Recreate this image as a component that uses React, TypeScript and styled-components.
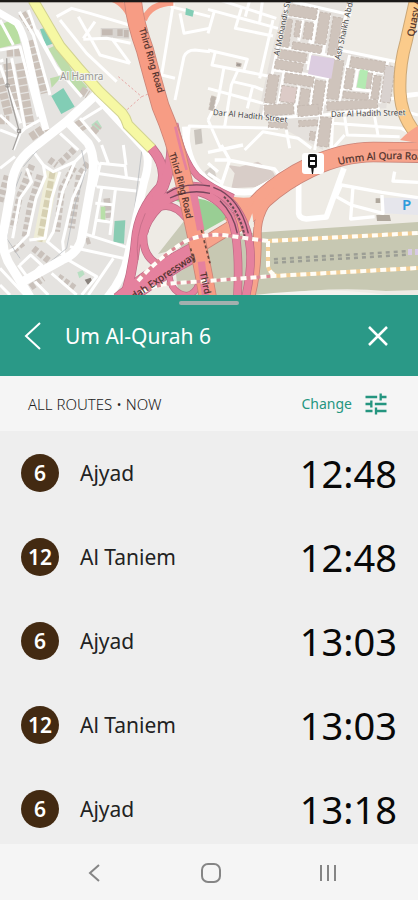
import React from "react";
import styled, { createGlobalStyle } from "styled-components";

const GlobalStyle = createGlobalStyle`
  * { box-sizing: border-box; }
  body {
    margin: 0;
    background: #f5f5f5;
    font-family: "Noto Sans", "Open Sans", sans-serif;
    color: #111;
  }
  button { font: inherit; border: 0; padding: 0; background: none; cursor: pointer; }
`;

const Page = styled.div`
  display: flex;
  flex-direction: column;
  min-height: 100vh;
`;

const MapArea = styled.section`
  flex: 1 0 295px;
  display: flex;
  overflow: hidden;
  border-top: 2px solid #1b1917;
  background: #eeebe5;
`;

const MapSvg = styled.svg`
  width: 100%;
  height: 293px;
  flex: 1;
  display: block;
`;

const SheetHeader = styled.header`
  display: flex;
  flex-direction: column;
  align-items: center;
  padding: 6px 24px 20px;
  background: #2a9987;
  color: #fff;
`;

const Handle = styled.div`
  width: 60px;
  height: 4px;
  border-radius: 2px;
  background: #a3b0ae;
`;

const TitleRow = styled.div`
  display: flex;
  align-items: center;
  align-self: stretch;
  margin-top: 11px;
  height: 40px;
`;

const Title = styled.h1`
  flex: 1;
  margin: 0 0 0 24px;
  font-size: 21px;
  line-height: 28px;
  font-weight: 400;
`;

const IconButton = styled.button`
  display: flex;
  color: inherit;
`;

const FilterBar = styled.div`
  display: flex;
  align-items: center;
  justify-content: space-between;
  height: 55px;
  padding: 0 28px;
  background: #f5f5f5;
`;

const FilterLabel = styled.span`
  font-size: 15px;
  line-height: 20px;
  font-weight: 300;
  color: #222;
`;

const ChangeButton = styled.button`
  display: flex;
  align-items: center;
  gap: 10px;
  color: #24957f;
  font-size: 14px;
  line-height: 20px;
`;

const Departures = styled.ul`
  flex: none;
  display: grid;
  grid-auto-rows: 84px;
  height: 413px;
  overflow: hidden;
  margin: 0;
  padding: 0;
  list-style: none;
  background: #eee;
`;

const Departure = styled.li`
  display: flex;
  align-items: center;
  padding: 0 21px;
`;

const RouteBadge = styled.span`
  display: flex;
  align-items: center;
  justify-content: center;
  width: 38px;
  height: 38px;
  border-radius: 50%;
  background: #432a12;
  color: #fff;
  font-size: 21px;
  line-height: 28px;
  font-weight: 600;
`;

const Destination = styled.span`
  flex: 1;
  margin-left: 21px;
  font-size: 21px;
  line-height: 28px;
  color: #222;
`;

const Time = styled.time`
  font-size: 38px;
  line-height: 48px;
  color: #080808;
`;

const SystemNav = styled.nav`
  display: grid;
  grid-template-columns: repeat(3, 117px);
  justify-content: center;
  align-items: center;
  height: 56px;
  padding: 2px 0 0 3px;
  background: #f5f5f5;
  color: #858585;
`;

const NavButton = styled.button`
  display: flex;
  justify-content: center;
  color: inherit;
`;

const departures = [
  { route: "6", name: "Ajyad", time: "12:48" },
  { route: "12", name: "Al Taniem", time: "12:48" },
  { route: "6", name: "Ajyad", time: "13:03" },
  { route: "12", name: "Al Taniem", time: "13:03" },
  { route: "6", name: "Ajyad", time: "13:18" },
];

type Block = [number, number, number, number, number, string?];

/* x, y, width, height, rotation, optional fill */
const northBlocks: Block[] = [
  [240, 12, 90, 34, 9], [336, 36, 32, 94, 9], [376, 50, 28, 115, 9],
  [228, 55, 26, 85, 8], [264, 62, 16, 48, 8], [292, 66, 26, 50, 8],
  [255, 125, 88, 22, 9], [214, 148, 84, 28, 9], [203, 178, 84, 28, 9],
  [182, 222, 32, 86, 9], [232, 218, 88, 30, 9], [222, 256, 46, 48, 9, "#dccbc7"],
  [280, 265, 28, 52, 9], [322, 240, 32, 100, 8], [372, 178, 36, 118, 8],
  [430, 170, 104, 32, 9], [416, 204, 24, 62, 8], [476, 218, 18, 46, 8],
  [498, 226, 22, 70, 8], [406, 274, 76, 20, 6], [168, 316, 88, 32, -4],
  [268, 318, 62, 32, -5], [356, 306, 152, 26, -3], [532, 196, 30, 110, 8, "#d9d2cf"],
  [338, 350, 34, 88, 7], [182, 366, 56, 16, 3], [272, 362, 56, 18, -3],
  [306, 394, 16, 26, 4], [10, 288, 14, 42, 10, "#bdb5ad"], [86, 188, 14, 10, 10, "#9e9791"],
];

const westRows: string[] = [
  "M22 190 L50 330", "M58 190 L92 378", "M95 120 L135 280", "M20 158 L66 156",
  "M-2 235 L26 345", "M66 40 L96 86", "M-5 360 L28 360", "M92 412 L142 378",
  "M232 362 L250 392", "M276 398 L296 376", "M242 270 L264 284",
];

const southRows: string[] = [
  "M0 170 L22 90", "M96 60 L60 150 L38 250", "M120 90 L92 180 L74 280",
  "M148 44 L170 60", "M180 54 L226 10", "M222 66 L186 130 L170 260",
  "M264 55 L238 90 L214 250", "M40 316 L74 290", "M100 310 L150 350",
  "M74 440 L130 400", "M175 395 L225 430", "M320 160 L328 230", "M258 290 L270 286",
];

/* Motorway ramps: path, width */
const ramps: [string, number][] = [
  ["M455 445 Q505 505 482 560 Q415 630 408 720 Q400 810 372 900", 26],
  ["M516 440 Q514 500 490 560 Q440 640 428 700", 28],
  ["M560 655 Q520 606 478 622 Q440 660 430 705 Q428 765 468 790", 20],
  ["M360 905 Q440 840 530 785 L604 745", 56],
  ["M525 370 Q548 480 592 528 Q630 560 700 592", 16],
  ["M455 640 Q500 570 580 558 Q655 562 700 615 Q750 680 752 770 Q752 830 735 900", 22],
  ["M450 650 Q500 580 590 574 Q655 590 692 650 Q722 720 712 900", 22],
  ["M508 830 Q515 880 560 886 Q605 880 606 780", 16],
];

const trunk = "M398 -10 Q402 60 435 150 Q456 230 482 320 Q525 420 543 510 Q566 600 584 690 Q606 790 625 900";
const ummQura = "M690 680 Q745 645 790 595 Q850 540 930 502 Q1030 456 1120 456 L1270 458";
const ummRamp = "M830 570 Q772 630 772 700 Q774 820 750 900";

function CityMap() {
  return (
    <MapSvg viewBox="0 2 418 293" preserveAspectRatio="xMidYMin slice" role="img" aria-label="Map around Umm Al Qura Road">
      <defs>
        <path id="ring-north" d="M139 29 Q148 58 160 101" />
        <path id="ring-mid" d="M169 154 Q180 185 188 228" />
        <path id="ring-south" d="M200 273 L208 310" />
        <path id="umm" d="M339 165 Q378 155 440 162" />
        <path id="expressway" d="M134 300 Q164 280 204 253" />
        <path id="hadith-west" d="M213 115 Q238 117 292 123" />
        <path id="hadith-east" d="M331 117 L410 115" />
        <path id="mohandis" d="M279 56 L297 -30" />
        <path id="shaikh" d="M340 60 L358 -20" />
        <path id="quasy" d="M414 37 L424 -20" />
      </defs>
      <rect width="418" height="295" fill="#eeebe5" />

      {/* West quarter */}
      <path d="M0 0H36L60 45L100 90L150 150L138 220L122 295H0Z" fill="#e5e3e0" />
      <g transform="scale(.3333)">
        <path d="M0 75 L45 55 L62 130 L0 144Z" fill="#b9dea1" />
        <path d="M120 88 L147 80 L166 128 L138 138Z" fill="#82cdb5" />
        <path d="M145 146 L174 132 L215 210 L262 262 L240 280 L200 236Z" fill="#bddcaa" />
        <path d="M150 235 L190 225 L155 263Z" fill="#bddcaa" />
        <path d="M154 288 L190 264 L224 320 L184 342Z" fill="#82cdb5" />
        <path d="M274 374 L292 360 L306 382 L288 398Z" fill="#b8dfc2" />
        <g fill="none" stroke="#cbc1b9" strokeWidth="25" strokeDasharray="19 4">
          {westRows.map((d) => <path key={d} d={d} />)}
        </g>
        <path d="M302 84 L388 84 L388 116 L302 112Z" fill="#d9d5d1" />
        <path d="M306 88h32v18h-32z M352 88h16v20h-16z M372 90h14v22h-14z" fill="#c4bab3" />
        <g fill="none" stroke="#fff" strokeWidth="9" strokeLinejoin="round">
          <path d="M58 35 L100 105 L150 285 M85 30 L110 100 L180 225 M110 90 L168 200 L245 290 M0 150 L60 140 L115 350 M35 175 L75 385 M0 195 L62 370 M10 180 L0 184 M0 345 L60 400 L75 385 L120 360 M60 400 L40 450 M0 390 L52 410 M240 355 L300 425 M245 360 L308 322 M310 320 L430 450 M180 400 L235 450 M0 60 L40 135" />
          <path d="M170 50 L215 25 L270 40 L388 75 M180 60 L260 160 L350 245 M235 50 L300 165 L390 190 M250 118 L320 115 L392 130 M335 115 L390 190 M285 65 L250 115" />
          <path d="M520 10 L485 225 L525 235 M540 40 L552 100 L630 85 M512 20 L630 50 M525 300 L552 170 Q560 150 585 150 L630 155 M560 450 L568 378 L630 380" />
        </g>
        <path d="M582 390 L604 386 L608 430 L586 434Z" fill="#c9c4bd" />
        <path d="M558 24 L582 32 L578 50 L556 44Z" fill="#82cdb5" />
        <path d="M355 230 L425 290 L380 330 M425 290 L445 282" fill="none" stroke="#e6a9a6" strokeWidth="3" strokeDasharray="7 6" />
        <path d="M20 175 L22 260 L58 395 L38 450" fill="none" stroke="#a5a29f" strokeWidth="4" />
        <path d="M52 388h10v10h-10z M18 252h9v9h-9z" fill="none" stroke="#8f8b88" strokeWidth="3" />
      </g>

      {/* South-west quarter */}
      <g transform="translate(0 145) scale(.3333)">
        <g fill="none" stroke="#efedd8" strokeWidth="38"><path d="M158 80 L145 150 L118 290" /></g>
        <g fill="none" stroke="#d6d0b2" strokeWidth="18" strokeDasharray="22 7"><path d="M158 80 L145 150 L118 290" /></g>
        <g fill="none" stroke="#c9c1bb" strokeWidth="20" strokeDasharray="15 7">
          {southRows.map((d) => <path key={d} d={d} />)}
        </g>
        <path d="M344 228 L376 226 L372 296 L340 290Z" fill="#8accb3" />
        <path d="M232 382 L248 376 L254 388 L238 400Z" fill="#b8dfc2" />
        <path d="M254 404 L272 398 L278 412 L264 420Z" fill="#8a837d" />
        <path d="M302 185 L316 185 L316 225 L302 225Z" fill="#b8dfa8" />
        <g fill="none" stroke="#fff" strokeWidth="9" strokeLinejoin="round">
          <path d="M100 20 L130 60 L160 80 L225 50 L265 10 M80 70 L95 110 L60 160 L38 280 M130 60 L136 95 L108 160 L84 270 L45 310 L15 325 M180 80 L155 160 L135 280 L88 285 M225 50 L188 140 L160 260 L142 290 L190 330 M256 78 L218 160 L188 290 L192 330" />
          <path d="M280 40 L300 60 L285 125 M290 125 L410 138 M290 85 L425 105 M300 55 L375 62 L380 100 M305 0 L325 55 M370 0 L378 60 M305 130 L280 270 M346 135 L330 270 M286 175 L345 180 M284 225 L335 232 M250 265 L390 310 M210 305 L230 310 L380 342 M340 340 L265 450 M205 345 L290 395 L245 450 M155 385 L230 450 M60 360 L92 330 L125 360 L85 400 L55 360 M105 410 L145 450 M0 370 L75 450 M0 420 L30 450 M0 70 L45 35" />
        </g>
        <g stroke="#aeb2b8" strokeWidth="2" fill="none">
          <path d="M65 80 L38 150 L20 280 L60 340 M125 0 L70 65 M245 15 L258 75 L225 180 L200 310 L85 405 M290 60 L270 200 L250 280 M425 20 L395 260" />
        </g>
      </g>

      {/* Wide local roads */}
      <g fill="none" stroke="#fff" strokeWidth="9" strokeLinejoin="round">
        <path d="M-2 12 L17 23 Q24 34 27 50 L37 97 L46 130" strokeWidth="7" />
        <path d="M99 92 L66 122 L33 148 Q12 164 11 190 L3 235 Q2 254 12 268 L30 297" />
        <path d="M66 120 L88 143 Q96 157 92 180 L82 236 Q80 252 62 260 L24 281" />
        <path d="M96 96 L145 149 Q151 160 144 182 L128 255 Q124 278 106 299" strokeWidth="8" />
      </g>
      <path d="M33 0 L60 46 Q78 68 99 91 L122 113 Q126 118 128 125 L152 149" fill="none" stroke="#d2d391" strokeWidth="11" />
      <path d="M33 0 L60 46 Q78 68 99 91 L122 113 Q126 118 128 125 L152 149" fill="none" stroke="#f6f8a3" strokeWidth="9" />

      {/* Northern and eastern quarters */}
      <g transform="translate(208 0) scale(.3333)">
        <path d="M232 0 L435 0 L395 150 L550 190 L535 325 L360 335 L345 450 L150 345 L190 160Z" fill="#e5e1dd" />
        <g fill="none" stroke="#fff" strokeWidth="9" strokeLinejoin="round">
          <path d="M0 28 L210 85 M35 0 L205 55 M20 30 L0 100 M100 25 L82 85 L195 108 M125 0 L112 50 M163 5 L155 65 M195 60 L155 235 M0 150 L118 178 L108 210 M22 155 L12 195 L190 230 M48 202 L30 300 L0 360 M90 210 L70 255 L50 380 M75 245 L140 260 L165 270 M135 255 L118 325 M0 265 L165 310 M0 380 L210 385 M0 360 L40 450 M110 450 L165 395 L270 415 L310 445 M235 390 L245 445" />
          <path d="M240 0 L165 350 M235 45 L325 60 M330 30 L300 210 M255 5 L430 45 M285 60 L272 122 M325 50 L305 130 M365 45 L345 165 M218 140 L310 155 L380 170 M210 175 L300 188 M198 210 L310 225 L370 238 M228 216 L210 315 M275 240 L260 350 M318 225 L305 350 M360 235 L320 450 M425 0 L380 190 L350 310 M395 150 L580 188 M425 165 L393 305 M410 200 L530 220 M450 200 L438 270 M500 218 L485 300 M405 265 L520 275 M540 180 L515 310 M165 315 L260 315 M180 355 L345 345 L515 325 M350 310 L520 300 L630 285" />
          <path d="M375 340 L370 450 M410 350 L418 405 L575 410 M375 370 L580 385 L630 410 M410 405 L370 450 M500 350 L510 405 M580 285 L630 280 M575 330 L630 345" />
        </g>
        {northBlocks.map(([x, y, w, h, r, fill]) => (
          <g key={`${x}-${y}`} transform={`rotate(${r} ${x} ${y})`}>
            <rect x={x} y={y} width={w} height={h} fill={fill ?? "#cfc4bc"} />
            <rect x={x} y={y} width={w} height={h} fill="none" stroke="#c5bab2" strokeWidth="3" strokeDasharray="9 5" />
          </g>
        ))}
        <path d="M310 166 L380 176 L370 236 L300 222Z" fill="#dccde0" />
        <path d="M456 208 L480 212 L472 268 L446 262Z" fill="#b4eab2" />
      </g>
      <g transform="translate(208 145) scale(.3333)">
        <path d="M60 60 L80 85 L70 130 L155 125 L205 100 L195 80 L150 50 L95 65Z" fill="#d8cdc8" />
        <path d="M-10 80 L15 60 L25 95 L5 110Z" fill="#d5d0ca" />
        <path d="M525 158 L630 158 L630 210 L525 205Z" fill="#e6e6ec" />
        <path d="M505 210h40l4 18h-42z M503 160h14v14h-14z" fill="#b0a89d" />
        <g fill="none" stroke="#fff" strokeWidth="10" strokeLinejoin="round">
          <path d="M0 22 L105 0 M40 0 L65 45 L40 120 M0 85 L45 115 M20 45 L60 45 L200 72 L215 92 L120 145 L0 130 M0 55 L30 80" />
          <path d="M272 110 L272 205 Q274 220 295 222 L355 216 L408 70" strokeWidth="17" />
          <path d="M385 155 L400 120 L522 142 L630 158 M435 125 L428 222 L500 215 M385 155 L430 180 L525 205 L522 150 M560 80 L555 108 L630 112" />
        </g>
      </g>
      <path d="M416 -2 L406 42 Q399 66 400 92 Q401 119 420 138" fill="none" stroke="#caa777" strokeWidth="13" />
      <path d="M416 -2 L406 42 Q399 66 400 92 Q401 119 420 138" fill="none" stroke="#fbcb8b" strokeWidth="11" />

      {/* Airfield */}
      <path d="M198 250 L232 234 L251 233 L418 222 V290 L386 291 Q330 286 262 296 H188Z" fill="#c7c8b2" />
      <path d="M158 254 L184 221 L198 243Z M176 274 L202 258 L204 295 L178 291Z" fill="#c9cab7" />
      <path d="M255 295 Q330 286 386 295Z" fill="#f5f3ef" />
      <path d="M274 261 L406 253" stroke="#9c9e95" strokeWidth="6" strokeDasharray="4 4" />
      <path d="M274 261 L406 253" stroke="#c7c8b2" strokeWidth="1" />
      <path d="M408 252 L418 252" stroke="#d7c9e4" strokeWidth="6" strokeDasharray="4 3" />

      {/* Junction */}
      <g transform="scale(.3333)" fill="none">
        <path d="M556 380 Q560 480 602 522 Q660 585 760 575 Q810 556 850 520 L930 482" stroke="#fff" strokeWidth="20" />
        <path d="M585 595 Q650 600 682 655 L604 698Z M508 596 L545 590 L552 610Z" fill="#99ce94" />
        <path d={ummQura} stroke="#c98378" strokeWidth="62" />
        <path d={ummRamp} stroke="#c98378" strokeWidth="26" />
        <path d="M600 738 L760 640" stroke="#c98378" strokeWidth="40" />
        <path d={ummQura} stroke="#f7a38b" strokeWidth="57" />
        <path d={ummRamp} stroke="#f7a38b" strokeWidth="21" />
        <path d="M600 738 L760 640" stroke="#f7a38b" strokeWidth="35" />
        <path d="M1200 420 Q1235 385 1262 375 V430Z" fill="#f7a38b" />
        <path d="M1165 450 H1262" stroke="#d88977" strokeWidth="3" />
        <path d="M738 690 L757 640 L762 680Z" fill="#f0ede6" />
        <path d="M690 588 Q730 598 770 588 L755 618 L715 622Z" fill="#f7a38b" />
        {ramps.map(([d, w]) => <path key={d} d={d} stroke="#bd6a84" strokeWidth={w + 4} />)}
        {ramps.map(([d, w]) => <path key={d} d={d} stroke="#e5819e" strokeWidth={w} />)}
        <path d="M455 570 Q420 630 410 700 Q418 740 430 740 Q428 680 460 640Z" fill="#e5819e" />
        <path d="M414 780 Q404 710 436 640" stroke="#c8708b" strokeWidth="3" />
        <path d="M330 -5 Q375 5 400 70 M520 8 Q450 10 432 60" stroke="#f79c84" strokeWidth="18" />
        <path d={trunk} stroke="#cc8578" strokeWidth="54" />
        <path d={trunk} stroke="#f79c84" strokeWidth="49" />
        <path d="M526 380 Q540 440 560 510" stroke="#e5819e" strokeWidth="8" />
        <path d="M576 556 L602 690" stroke="#e5819e" strokeWidth="22" />
        <path d="M604 785 L618 895" stroke="#e5819e" strokeWidth="22" />
        <path d="M500 580 Q550 545 630 558 M640 562 Q720 590 745 700 M510 594 Q570 566 630 580 M660 602 Q700 640 712 700" stroke="#76465c" strokeWidth="4" />
        <path d="M672 590 Q722 640 734 710" stroke="#674a53" strokeWidth="6" strokeDasharray="8 5" />
        <path d="M604 690 L630 790 M572 745 L582 790" stroke="#67483f" strokeWidth="5" strokeDasharray="9 7" />
      </g>
      <g fill="none">
        <path d="M138 281 Q156 260 184 242 Q204 232 230 236 L268 241 M142 292 Q158 284 176 283 L208 281 L274 276" stroke="#dd8793" strokeWidth="3" />
        <path d="M268 241 L418 233 M274 276 L418 268 M268 241 V266 Q269 273 277 276" stroke="#f3cf96" strokeWidth="4" />
        <path d="M138 281 Q156 260 184 242 Q204 232 230 236 L268 241 L418 233 M142 292 Q158 284 176 283 L208 281 L274 276 L418 268 M268 241 V266 Q269 273 277 276" stroke="#fffdf7" strokeWidth="4" strokeDasharray="6 4" />
      </g>

      {/* Labels */}
      <text x="60" y="80" fontSize="10" fill="#999996" stroke="#f3f2ef" strokeWidth="2" paintOrder="stroke">Al Hamra</text>
      <g fontSize="9" fill="#4c2f2a" stroke="#4c2f2a" strokeWidth="0.2">
        <text><textPath href="#ring-north">Third Ring Road</textPath></text>
        <text><textPath href="#ring-mid">Third Ring Road</textPath></text>
        <text><textPath href="#ring-south">Third</textPath></text>
        <text fontSize="10"><textPath href="#umm">Umm Al Qura Road</textPath></text>
        <text fontSize="10"><textPath href="#expressway">dah Expressway</textPath></text>
        <text fontSize="10"><textPath href="#quasy">Quasy A</textPath></text>
      </g>
      <g fontSize="8" fill="#444" stroke="#f4f2ef" strokeWidth="1" paintOrder="stroke">
        <text><textPath href="#hadith-west">Dar Al Hadith Street</textPath></text>
        <text><textPath href="#hadith-east">Dar Al Hadith Street</textPath></text>
        <text><textPath href="#mohandis">Al Mohandis Street</textPath></text>
        <text><textPath href="#shaikh">Ash Shaikh Abdul</textPath></text>
      </g>
      <text x="402" y="210" fontSize="15" fontWeight="600" fill="#2e9bdc">P</text>

      {/* Stop marker */}
      <rect x="302" y="153" width="22" height="21" rx="3" fill="#fff" />
      <rect x="308" y="154" width="9" height="14" rx="2" fill="#111" />
      <path d="M310 157h5v3h-5z M310 162h5v3h-5z" fill="#fff" />
      <path d="M311 167h3l-1 7h-1z" fill="#111" />
      <rect y="2" width="418" height="1" fill="#191715" fillOpacity=".3" />
    </MapSvg>
  );
}

const TuneIcon = () => (
  <svg width="28" height="28" viewBox="0 0 24 24" fill="currentColor" aria-hidden="true">
    <path d="M3 17v2h6v-2H3zM3 5v2h10V5H3zm10 16v-2h8v-2h-8v-2h-2v6h2zM7 9v2H3v2h4v2h2V9H7zm14 4v-2H11v2h10zm-6-4h2V7h4V5h-4V3h-2v6z" />
  </svg>
);

export default function App() {
  return (
    <Page>
      <GlobalStyle />
      <MapArea><CityMap /></MapArea>
      <SheetHeader>
        <Handle />
        <TitleRow>
          <IconButton type="button" aria-label="Back">
            <svg width="17" height="28" viewBox="0 0 17 28" fill="none" stroke="currentColor" strokeWidth="2">
              <path d="M16 1 L2 14 L16 27" />
            </svg>
          </IconButton>
          <Title>Um Al-Qurah 6</Title>
          <IconButton type="button" aria-label="Close">
            <svg width="32" height="32" viewBox="0 0 32 32" fill="none" stroke="currentColor" strokeWidth="2.5">
              <path d="M7 7 L25 25 M25 7 L7 25" />
            </svg>
          </IconButton>
        </TitleRow>
      </SheetHeader>
      <FilterBar>
        <FilterLabel>ALL ROUTES • NOW</FilterLabel>
        <ChangeButton type="button">Change<TuneIcon /></ChangeButton>
      </FilterBar>
      <Departures>
        {departures.map((d, i) => (
          <Departure key={i}>
            <RouteBadge>{d.route}</RouteBadge>
            <Destination>{d.name}</Destination>
            <Time>{d.time}</Time>
          </Departure>
        ))}
      </Departures>
      <SystemNav>
        <NavButton type="button" aria-label="System back">
          <svg width="12" height="20" viewBox="0 0 12 20" fill="none" stroke="currentColor" strokeWidth="2">
            <path d="M11 2 L2 10 L11 18" />
          </svg>
        </NavButton>
        <NavButton type="button" aria-label="Home">
          <svg width="20" height="20" viewBox="0 0 20 20" fill="none" stroke="currentColor" strokeWidth="2">
            <rect x="1" y="1" width="18" height="18" rx="6" />
          </svg>
        </NavButton>
        <NavButton type="button" aria-label="Recent apps">
          <svg width="18" height="18" viewBox="0 0 18 18" fill="none" stroke="currentColor" strokeWidth="2">
            <path d="M2 1v16M9 1v16M16 1v16" />
          </svg>
        </NavButton>
      </SystemNav>
    </Page>
  );
}
